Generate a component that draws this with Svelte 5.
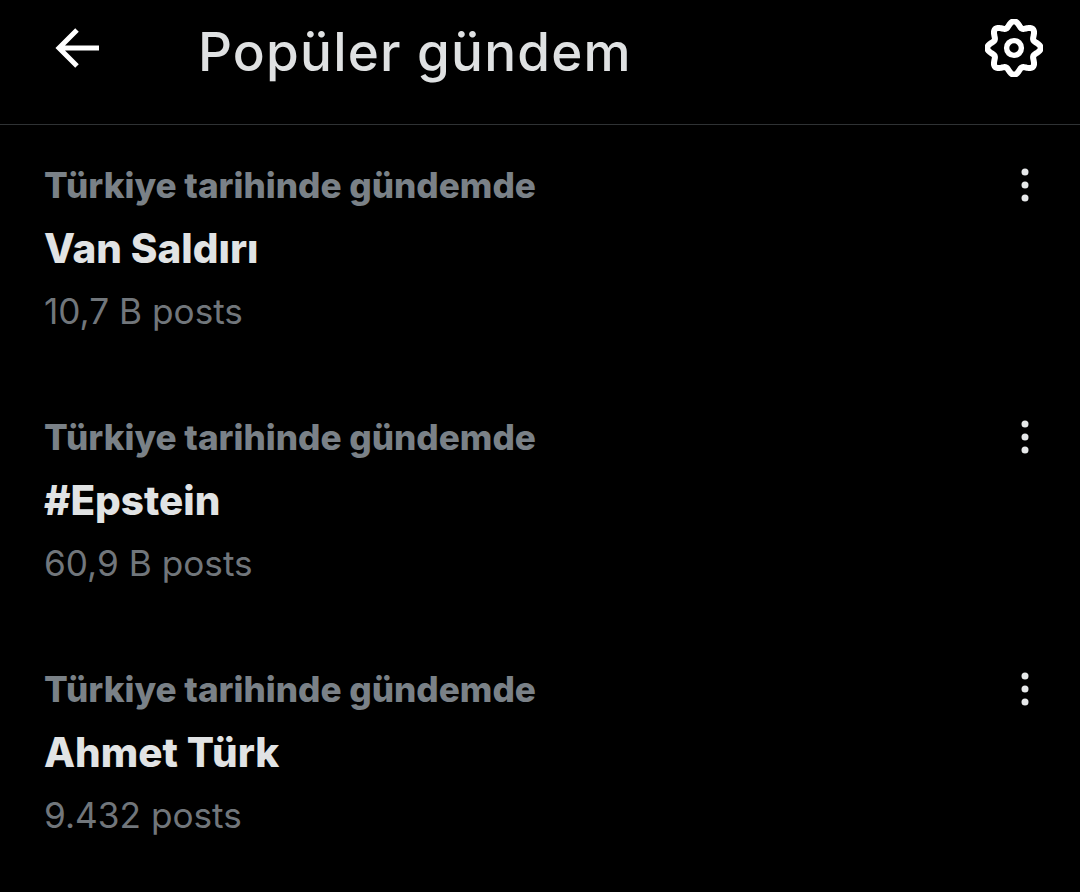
<script>
  const trends = [
    { name: 'Van Saldırı', count: '10,7 B posts' },
    { name: '#Epstein', count: '60,9 B posts' },
    { name: 'Ahmet Türk', count: '9.432 posts' }
  ];
  let d = '';
  for (let i = 0; i < 240; i++) {
    const t = (i / 240) * Math.PI * 2;
    const r = 23.8 + 2.9 * Math.cos(8 * t);
    d += (i ? 'L' : 'M') + (29 + r * Math.sin(t)).toFixed(2) + ' ' + (29 - r * Math.cos(t)).toFixed(2);
  }
  d += 'Z';
</script>

<div class="page">
  <header>
    <svg class="back" viewBox="0 0 46 46" width="46" height="46" aria-hidden="true">
      <path d="M44 23H4M22 5 4 23l18 18" fill="none" stroke="#fff" stroke-width="5" stroke-linecap="butt" stroke-linejoin="miter" />
    </svg>
    <h1>Popüler gündem</h1>
    <svg class="gear" viewBox="0 0 58 58" width="58" height="58" aria-hidden="true">
      <path {d} fill="none" stroke="#fff" stroke-width="6" stroke-linejoin="round" />
      <circle cx="29" cy="29" r="7.4" fill="none" stroke="#fff" stroke-width="5.4" />
    </svg>
  </header>
  {#each trends as t}
    <section>
      <div class="top">
        <span class="meta">Türkiye tarihinde gündemde</span>
        <svg class="more" viewBox="0 0 10 38" width="10" height="38" aria-hidden="true">
          <circle cx="5" cy="6" r="3.5" /><circle cx="5" cy="19" r="3.5" /><circle cx="5" cy="32" r="3.5" />
        </svg>
      </div>
      <div class="name">{t.name}</div>
      <div class="count">{t.count}</div>
    </section>
  {/each}
</div>

<style>
  :global(body) { margin: 0; background: #000; }
  .page {
    width: 1080px; height: 892px; background: #000; overflow: hidden;
    font-family: Inter, "Noto Sans", "Liberation Sans", sans-serif;
  }
  header {
    height: 125px; box-sizing: border-box; border-bottom: 1px solid #2f3234;
    display: flex; align-items: center; padding: 0 37px 29px 55px;
  }
  .back { flex: none; }
  h1 {
    margin: 9px 0 0 97px; flex: 1;
    font-size: 53px; line-height: 60px; font-weight: 500; color: #dfe1e2; letter-spacing: 1.2px;
  }
  .gear { flex: none; }
  section { height: 252px; box-sizing: border-box; padding: 41px 50px 0 44px; }
  .top { display: flex; justify-content: space-between; align-items: center; height: 38px; }
  .meta { font-size: 35.15px; font-weight: 800; color: #7a8187; }
  .more { fill: #e7e9ea; }
  .name { margin-top: 23px; font-size: 40.4px; line-height: 44px; font-weight: 800; color: #e1e3e4; }
  .count { margin-top: 20px; font-size: 35.2px; line-height: 40px; font-weight: 400; color: #71767b; }
</style>
